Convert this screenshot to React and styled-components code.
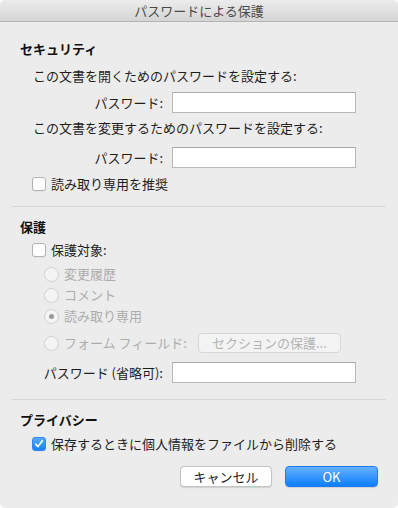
import React from 'react'
import styled, { createGlobalStyle } from 'styled-components'

const GlobalStyle = createGlobalStyle`
  html, body { margin: 0; padding: 0; background: #fff; }
  body {
    font-family: 'Noto Sans CJK JP', 'Noto Sans', sans-serif;
    font-size: 13px; color: #1e1e1e;
  }
  * { box-sizing: border-box; }
`

const Window = styled.div`
  width: 398px; height: 508px;
  background: #ececec;
  border-radius: 5px;
  overflow: hidden;
  display: flex; flex-direction: column;
`
const TitleBar = styled.div`
  height: 22px; flex: none;
  background: linear-gradient(#ececec, #d4d4d4);
  border-bottom: 1px solid #b3b3b3;
  display: flex; align-items: center; justify-content: center;
  color: #4a4a4a; font-size: 13px; line-height: 1;
`
const Body = styled.div`
  padding: 18px 20px 0 20px;
  display: flex; flex-direction: column;
`
const Heading = styled.div`
  height: 18px; line-height: 18px; margin-top: ${p => p.$mt || 0}px;
  font-weight: 700; font-size: 13px; color: #111;
`
const Text = styled.div`
  height: 18px; line-height: 18px; margin-top: ${p => p.$mt}px;
  padding-left: 13px; white-space: nowrap;
`
const FieldRow = styled.div`
  height: 21px; margin-top: ${p => p.$mt}px;
  display: grid; grid-template-columns: 130px 184px; column-gap: 9px;
  margin-left: 13px; align-items: center;
`
const Label = styled.label`
  text-align: right; white-space: nowrap; line-height: 18px;
`
const Input = styled.input`
  height: 21px; width: 184px; margin: 0;
  border: 1px solid #b7b7b7; border-top-color: #a9a9a9;
  background: #fff; outline: none; padding: 0 4px;
`
const CheckRow = styled.label`
  height: 18px; margin-top: ${p => p.$mt}px; margin-left: 12px;
  display: flex; align-items: center; gap: 5px; line-height: 18px;
  white-space: nowrap;
`
const Box = styled.span`
  width: 14px; height: 14px; border-radius: 3px; flex: none;
  border: 1px solid ${p => p.$checked ? '#2f86f5' : '#b3b3b3'};
  background: ${p => p.$checked ? 'linear-gradient(#5aa8fc, #1a7ff7)' : '#fff'};
  box-shadow: 0 0.5px 0.5px rgba(0,0,0,0.08);
  display: flex; align-items: center; justify-content: center;
`
const RadioRow = styled.div`
  height: ${p => p.$h || 18}px; margin-top: ${p => p.$mt}px; margin-left: 24px;
  display: flex; align-items: center; line-height: 18px;
  color: #acacac; white-space: nowrap;
`
const Radio = styled.span`
  width: 15px; height: 15px; border-radius: 50%; flex: none;
  border: 1px solid #cfcfcf; background: #f4f4f4;
  margin-right: 5px;
  display: flex; align-items: center; justify-content: center;
  &::after {
    content: ''; display: ${p => p.$on ? 'block' : 'none'};
    width: 5px; height: 5px; border-radius: 50%; background: #9a9a9a;
  }
`
const SectionButton = styled.button`
  margin-left: 11px; width: 143px; height: 20px; padding: 0;
  border: 1px solid #d6d6d6; border-radius: 4px;
  background: #f3f3f3; color: #b3b3b3;
  font: inherit; line-height: 18px;
`
const Divider = styled.hr`
  margin: ${p => p.$mt}px -8px 0; border: none;
  height: 1px; background: #d6d6d6;
`
const ButtonBar = styled.div`
  margin-top: 13px; display: flex; justify-content: flex-end; gap: 13px;
`
const Button = styled.button`
  width: ${p => p.$w}px; height: 21px; padding: 0; border-radius: 4px;
  font: inherit; line-height: 19px;
  border: 1px solid ${p => p.$primary ? '#1f7bf2' : '#c4c4c4'};
  background: ${p => p.$primary ? 'linear-gradient(#67b0fb, #0c7ffe)' : '#fff'};
  color: ${p => p.$primary ? '#fff' : '#1e1e1e'};
  box-shadow: 0 0.5px 1px rgba(0,0,0,0.12);
`

const Check = () => (
  <svg width="10" height="10" viewBox="0 0 10 10">
    <path d="M1.8 5.2 L4 7.6 L8.3 1.8" fill="none" stroke="#fff" strokeWidth="1.7" strokeLinecap="round" strokeLinejoin="round" />
  </svg>
)

const CheckBox = ({ checked, label, mt }) => (
  <CheckRow $mt={mt}>
    <Box $checked={checked}>{checked && <Check />}</Box>
    {label}
  </CheckRow>
)

const Field = ({ label, mt }) => (
  <FieldRow $mt={mt}>
    <Label>{label}</Label>
    <Input type="password" />
  </FieldRow>
)

export default function App() {
  return (
    <Window>
      <GlobalStyle />
      <TitleBar>パスワードによる保護</TitleBar>
      <Body>
        <Heading>セキュリティ</Heading>
        <Text $mt={9}>この文書を開くためのパスワードを設定する:</Text>
        <Field label="パスワード:" mt={7} />
        <Text $mt={6}>この文書を変更するためのパスワードを設定する:</Text>
        <Field label="パスワード:" mt={10} />
        <CheckBox label="読み取り専用を推奨" mt={7} />
        <Divider $mt={13} />

        <Heading $mt={11}>保護</Heading>
        <CheckBox label="保護対象:" mt={5} />
        <RadioRow $mt={6}><Radio />変更履歴</RadioRow>
        <RadioRow $mt={3}><Radio />コメント</RadioRow>
        <RadioRow $mt={3}><Radio $on />読み取り専用</RadioRow>
        <RadioRow $mt={8} $h={20}>
          <Radio />フォーム フィールド:
          <SectionButton disabled>セクションの保護...</SectionButton>
        </RadioRow>
        <Field label="パスワード (省略可):" mt={9} />
        <Divider $mt={16} />

        <Heading $mt={11}>プライバシー</Heading>
        <CheckBox checked label="保存するときに個人情報をファイルから削除する" mt={6} />
        <ButtonBar>
          <Button $w={92}>キャンセル</Button>
          <Button $w={93} $primary>OK</Button>
        </ButtonBar>
      </Body>
    </Window>
  )
}
